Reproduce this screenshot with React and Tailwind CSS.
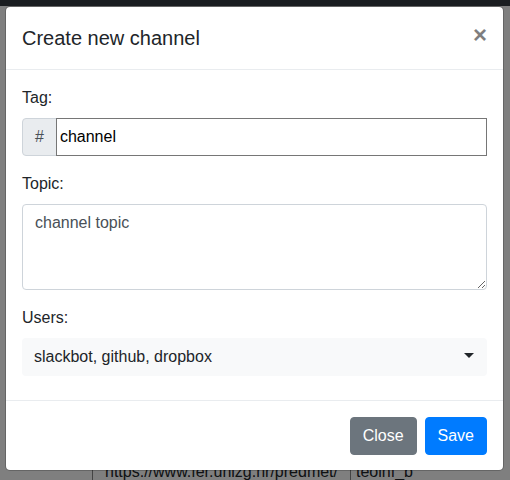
import React from "react";

function PageBehind() {
  return (
    <div className="flex h-full flex-col bg-white">
      <div className="h-[6px] bg-[#343a40]" />
      <div className="flex-1" />
      <div className="grid h-[33px] shrink-0 grid-cols-[92px_258px_1fr] overflow-hidden text-[16px] leading-6 text-[#212529]">
        <div />
        <div className="overflow-hidden whitespace-nowrap border-l border-[#888] px-3 pt-[13px]">
          https://www.fer.unizg.hr/predmet/
        </div>
        <div className="whitespace-nowrap border-l border-[#888] pl-[5px] pt-[13px]">teoinf_b</div>
      </div>
    </div>
  );
}

function Label({ children }) {
  return <label className="mb-2 block text-[16px] leading-6 text-[#212529]">{children}</label>;
}

export default function App() {
  return (
    <div
      className="relative h-[480px] w-[510px] overflow-hidden"
      style={{ fontFamily: '"Liberation Sans", Arial, sans-serif' }}
    >
      <PageBehind />
      <div className="absolute inset-0 bg-black/50" />

      <div className="absolute left-[5px] top-[6px] w-[499px] rounded-[5px] border border-black/20 bg-white bg-clip-padding">
        {/* header */}
        <div className="flex items-start justify-between border-b border-[#e9ecef] p-4">
          <h5 className="text-[20px] font-normal leading-[30px] text-[#212529]">Create new channel</h5>
          <button className="-m-4 ml-auto p-4 text-[24px] font-bold leading-none text-black opacity-50">
            ×
          </button>
        </div>

        {/* body */}
        <div className="px-4 pt-4 pb-6">
          <div className="mb-4">
            <Label>Tag:</Label>
            <div className="flex h-[38px]">
              <span className="-mr-px flex items-center rounded-l-[4px] border border-[#ced4da] bg-[#e9ecef] px-3 text-[16px] text-[#495057]">
                #
              </span>
              <input
                className="relative min-w-0 flex-1 border border-[#767676] bg-white pl-[3px] text-[16px] text-black outline-none"
                defaultValue="channel"
              />
            </div>
          </div>

          <div className="mb-4">
            <Label>Topic:</Label>
            <textarea
              className="block h-[86px] w-full resize-y rounded-[4px] border border-[#ced4da] px-3 py-1.5 text-[16px] leading-6 text-[#495057] outline-none"
              defaultValue="channel topic"
            />
          </div>

          <div>
            <Label>Users:</Label>
            <div className="flex h-[38px] items-center justify-between rounded-[4px] bg-[#f8f9fa] pl-3 pr-[13px] text-[16px] text-[#212529]">
              <span>slackbot, github, dropbox</span>
              <span className="mb-[3px] h-0 w-0 border-x-[5px] border-t-[5px] border-x-transparent border-t-[#212529]" />
            </div>
          </div>
        </div>

        {/* footer */}
        <div className="flex justify-end gap-2 border-t border-[#e9ecef] px-4 pt-4 pb-[15px]">
          <button className="h-[38px] rounded-[4px] border border-[#6c757d] bg-[#6c757d] px-3 text-[16px] text-white">
            Close
          </button>
          <button className="h-[38px] rounded-[4px] border border-[#007bff] bg-[#007bff] px-3 text-[16px] text-white">
            Save
          </button>
        </div>
      </div>
    </div>
  );
}
